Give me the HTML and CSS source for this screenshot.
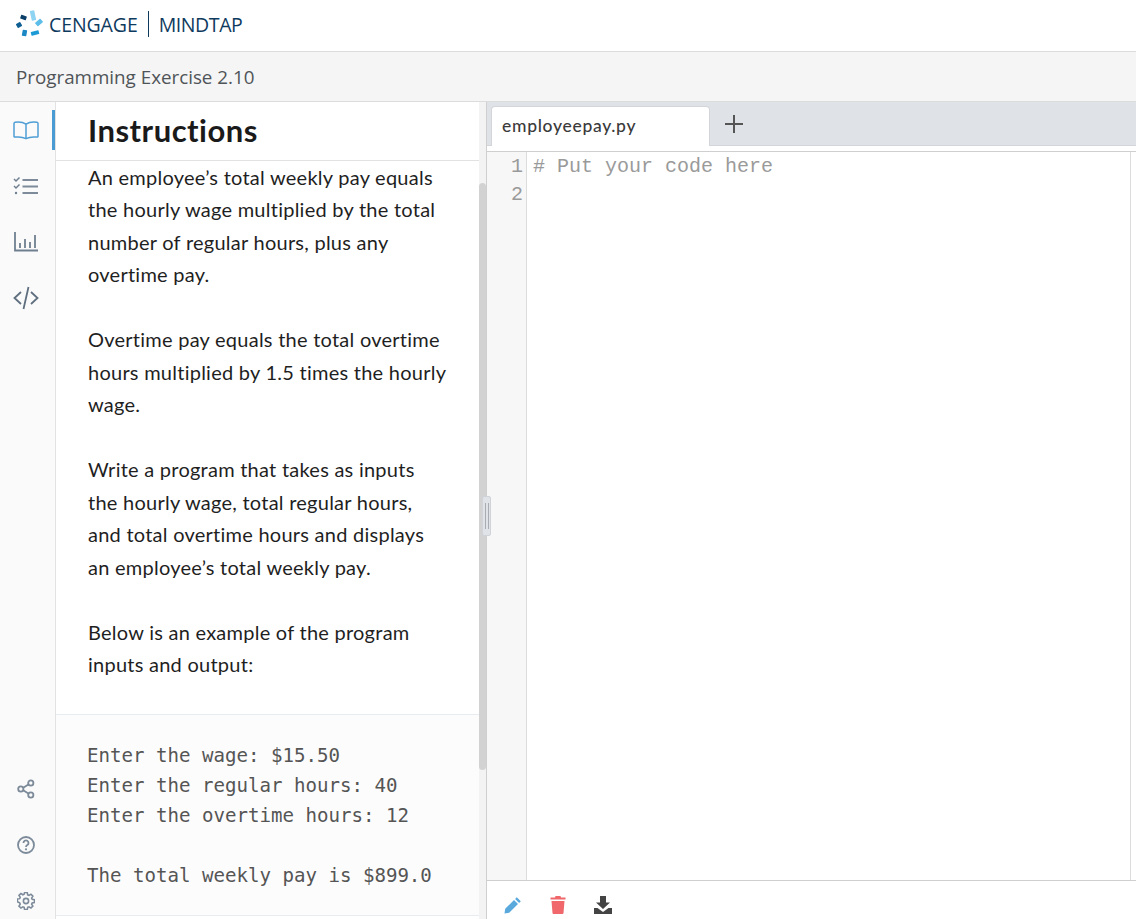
FILE: index.html
```html
<!DOCTYPE html>
<html lang="en">
<head>
<meta charset="utf-8">
<title>Programming Exercise 2.10</title>
<link rel="stylesheet" href="styles.css">
</head>
<body>
<header class="brand">
  <svg class="logo" width="30" height="28" viewBox="0 0 30 28">
    <rect x="14.750" y="0.500" width="4.500" height="10" rx="0.5" transform="rotate(-12 17 5.500)" fill="#8fd3f2"/>
    <rect x="19.500" y="10.250" width="7" height="4.500" rx="0.5" transform="rotate(-40 23 12.500)" fill="#5bbde8"/>
    <rect x="15" y="21" width="8" height="4" rx="0.5" transform="rotate(-15 19 23)" fill="#1b9ad6"/>
    <rect x="6.250" y="20" width="4.500" height="6" rx="0.5" transform="rotate(10 8.500 23)" fill="#1b87c4"/>
    <rect x="0.500" y="12.750" width="5" height="4.500" rx="0.5" transform="rotate(-30 3 15)" fill="#0f5f93"/>
    <rect x="4.500" y="5.500" width="6" height="4" rx="0.5" transform="rotate(20 7.500 7.500)" fill="#0b3f68"/>
  </svg>
  <span class="brand-name">CENGAGE</span>
  <span class="brand-sep"></span>
  <span class="brand-name product">MINDTAP</span>
</header>
<div class="subtitle">Programming Exercise 2.10</div>
<main class="workspace">
  <nav class="rail">
    <div class="rail-group">
      <div class="rail-item active">
        <svg width="26" height="20" viewBox="0 0 26 20" fill="none" stroke="#4f9fd6" stroke-width="1.5"><path d="M13 4.2C10.5 2.4 6 1.6 2 2.2Q1 2.4 1 3.4V16.2Q1 17.2 2 17.1C6 16.6 10 17 13 18.6C16 17 20 16.6 24 17.1Q25 17.2 25 16.2V3.4Q25 2.4 24 2.2C20 1.6 15.5 2.4 13 4.2ZM13 4.2V18.6"/></svg>
      </div>
      <div class="rail-item">
        <svg width="26" height="20" viewBox="0 0 26 20" fill="none" stroke="#6f7f8f" stroke-width="1.500"><path d="M1 3l2 2 3.500-3.500M1 10l2 2 3.500-3.500"/><circle cx="3" cy="17" r="1.200" fill="#6f7f8f" stroke="none"/><path d="M9.500 4H25M9.500 10.500H25M9.500 17H25" stroke-width="2" stroke="#7c8a99"/></svg>
      </div>
      <div class="rail-item">
        <svg width="24" height="20" viewBox="0 0 24 20" fill="none" stroke="#6f7f8f" stroke-width="1.500"><path d="M1 0V18.500H24" stroke-width="1.800"/><path d="M6 16V11M11 16V7M16 16V10M21 16V3" stroke-width="1.800"/></svg>
      </div>
      <div class="rail-item">
        <svg width="26" height="24" viewBox="0 0 26 24" fill="none" stroke="#5f6f7f" stroke-width="1.800"><path d="M8 6L1.500 12L8 18M18 6L24.500 12L18 18M15.500 1L10.500 23"/></svg>
      </div>
    </div>
    <div class="rail-group rail-bottom">
      <div class="rail-item">
        <svg width="18" height="20" viewBox="0 0 18 20" fill="none" stroke="#7c8a99" stroke-width="1.800"><circle cx="3.800" cy="10" r="2.600"/><circle cx="13.800" cy="4" r="2.600"/><circle cx="13.800" cy="16" r="2.600"/><path d="M6.200 8.700L11.400 5.400M6.200 11.300L11.400 14.600"/></svg>
      </div>
      <div class="rail-item">
        <svg width="18" height="18" viewBox="0 0 18 18" fill="none" stroke="#7c8a99" stroke-width="1.800"><circle cx="9" cy="9" r="8"/><path d="M6.500 7a2.500 2.500 0 1 1 3.800 2.100C9.400 9.700 9 10 9 11"/><circle cx="9" cy="13.300" r="1.100" fill="#7c8a99" stroke="none"/></svg>
      </div>
      <div class="rail-item">
        <svg width="18" height="18" viewBox="0 0 18 18" fill="none" stroke="#7c8a99" stroke-width="1.600"><circle cx="9" cy="9" r="2.600"/><path d="M7.600 1h2.800l.4 2.300 1.400.6 1.900-1.300 2 2-1.300 1.900.6 1.400 2.300.4v2.800l-2.300.4-.6 1.400 1.300 1.900-2 2-1.900-1.300-1.400.6-.4 2.300H7.600l-.4-2.300-1.400-.6-1.900 1.300-2-2 1.300-1.900-.6-1.400L.3 10.400V7.600l2.300-.4.6-1.400-1.300-1.900 2-2 1.900 1.300 1.400-.6z" transform="translate(.1 -.4) scale(.98)"/></svg>
      </div>
    </div>
  </nav>
  <section class="instructions">
    <h1 class="instructions-title">Instructions</h1>
    <div class="instructions-scroll">
      <div class="instructions-body">
        <p>An employee’s total weekly pay equals the hourly wage multiplied by the total number of regular hours, plus any overtime pay.</p>
        <p>Overtime pay equals the total overtime hours multiplied by 1.5 times the hourly wage.</p>
        <p>Write a program that takes as inputs the hourly wage, total regular hours, and total overtime hours and displays an employee’s total weekly pay.</p>
        <p>Below is an example of the program inputs and output:</p>
      </div>
      <pre class="sample">Enter the wage: $15.50
Enter the regular hours: 40
Enter the overtime hours: 12

The total weekly pay is $899.0</pre>
    </div>
  </section>
  <div class="splitter">
    <div class="scroll-thumb"></div>
    <div class="grip"><span></span><span></span></div>
  </div>
  <section class="editor">
    <div class="tabs">
      <div class="tab">employeepay.py</div>
      <svg class="add-tab" width="18" height="18" viewBox="0 0 18 18" stroke="#555" stroke-width="2"><path d="M9 0V18M0 9H18"/></svg>
    </div>
    <div class="code">
      <div class="gutter"><span>1</span><span>2</span></div>
      <div class="lines"># Put your code here</div>
      <div class="minimap"></div>
    </div>
    <div class="toolbar">
      <svg width="18" height="18" viewBox="0 0 18 18" fill="#5aa9dd"><path d="M12.800 1.200l4 4-1.700 1.700-4-4zM10 4l4 4-8.800 8.800L.5 17.500l.7-4.700z"/></svg>
      <svg width="16" height="18" viewBox="0 0 16 18" fill="#f0686c"><path d="M5.500 0h5l.5 1.500h4.500V3.500H.5V1.500H5zM1.500 5h13l-1 12q-.1 1-1 1h-9q-.9 0-1-1z"/></svg>
      <svg width="18" height="18" viewBox="0 0 18 18" fill="#444"><path d="M6 0h6v6.500h4L9 13 2 6.500h4zM0 12h3.500L9 16l5.500-4H18v6H0z"/></svg>
    </div>
  </section>
</main>
</body>
</html>
```
FILE: styles.css
```css
* { box-sizing: border-box; }
html, body { height: 100%; }
body {
  margin: 0;
  height: 919px;
  overflow: hidden;
  display: flex;
  flex-direction: column;
  background: #fff;
  font-family: "Open Sans", sans-serif;
}
.brand {
  flex: 0 0 52px;
  display: flex;
  align-items: center;
  padding: 0 0 0 16px;
  border-bottom: 1px solid #dcdcdc;
  background: #fff;
}
.logo { margin-right: 3px; margin-top: -3px; }
.brand-name { font-size: 19.500px; color: #0e3a5e; letter-spacing: -0.100px; margin-top: -3px; }
.brand-name.product { letter-spacing: -0.400px; }
.brand-sep { width: 1px; height: 26px; background: #0e3a5e; margin: -3px 10px 0 10px; }
.subtitle {
  flex: 0 0 50px;
  display: flex;
  align-items: center;
  padding-left: 16px;
  font-size: 18.800px;
  color: #4f5458;
  background: #f5f5f5;
  border-bottom: 1px solid #dcdcdc;
}
.workspace { flex: 1; min-height: 0; display: flex; }
.rail {
  flex: 0 0 56px;
  display: flex;
  flex-direction: column;
  justify-content: space-between;
  background: #fafafa;
  border-right: 1px solid #e2e2e2;
}
.rail-bottom { margin-bottom: -10px; }
.rail-item {
  height: 56px;
  display: flex;
  align-items: center;
  justify-content: center;
  padding-right: 3px;
  position: relative;
}
.rail-item.active::after {
  content: "";
  position: absolute;
  right: 0;
  top: 8px;
  width: 3px;
  height: 40px;
  background: #4a9ad4;
}
.instructions {
  flex: 0 0 423px;
  min-width: 0;
  display: flex;
  flex-direction: column;
  overflow: hidden;
}
.instructions-title {
  flex: 0 0 59px;
  margin: 0;
  padding: 9px 0 0 32px;
  font-family: "Lato", sans-serif;
  font-size: 31px;
  font-weight: 700;
  letter-spacing: 0.500px;
  font-variant-ligatures: none;
  line-height: 39px;
  color: #1a1a1a;
  border-bottom: 1px solid #e2e2e2;
}
.instructions-scroll { flex: 1; min-height: 0; overflow: hidden; }
.instructions-body {
  margin-top: -0.400px;
  padding: 0 32px 1px 32px;
  font-family: "Lato", sans-serif;
  font-size: 20px;
  letter-spacing: 0.250px;
  font-variant-ligatures: none;
  line-height: 32.500px;
  color: #1f1f1f;
}
.instructions-body p { margin: 0 0 32.500px; }
.sample {
  margin: 0;
  padding: 26px 32px 24px 31px;
  font-family: "DejaVu Sans Mono", monospace;
  font-size: 19.100px;
  line-height: 30px;
  color: #555;
  background: #fcfcfc;
  border-top: 1px solid #e6ecef;
  border-bottom: 1px solid #e6ecef;
}
.splitter {
  flex: 0 0 8px;
  position: relative;
  background: #f3f3f3;
  border-right: 1px solid #cfcfcf;
}
.scroll-thumb {
  position: absolute;
  left: 0;
  top: 81px;
  width: 7px;
  height: 587px;
  background: #d2d2d2;
  border-radius: 4px;
}
.grip {
  position: absolute;
  left: 3px;
  top: 394px;
  width: 9px;
  height: 40px;
  display: flex;
  justify-content: center;
  align-items: center;
  gap: 2px;
  background: #e0e3e8;
  border: 1px solid #d0d3d8;
  border-radius: 2px;
  z-index: 1;
}
.grip span { width: 1px; height: 26px; background: #a9adb2; }
.editor { flex: 1; min-width: 0; display: flex; flex-direction: column; }
.tabs {
  flex: 0 0 44px;
  display: flex;
  align-items: flex-end;
  background: #dfe2e7;
  padding-left: 4px;
  border-bottom: 1px solid #d3d5d9;
}
.tab {
  width: 219px;
  height: 40px;
  margin-bottom: -1px;
  padding: 6px 0 0 10px;
  font-family: "Lato", sans-serif;
  font-size: 17.500px;
  font-weight: 500;
  letter-spacing: 0.700px;
  line-height: 26px;
  color: #3a3a3a;
  background: #fff;
  border: 1px solid #d3d5d9;
  border-bottom: 0;
  border-radius: 4px 4px 0 0;
}
.add-tab { margin: 0 0 12px 15px; }
.code {
  flex: 1;
  min-height: 0;
  display: flex;
  margin-top: 5px;
  border-top: 1px solid #cfcfcf;
  font-family: "Liberation Mono", monospace;
  font-size: 20px;
  line-height: 28px;
}
.gutter {
  flex: 0 0 40px;
  display: flex;
  flex-direction: column;
  align-items: flex-end;
  padding: 1px 3px 0 0;
  color: #9a9a9a;
  background: #f7f7f7;
  border-right: 1px solid #dcdcdc;
}
.lines { flex: 1; padding: 1px 0 0 6px; color: #9a9a9a; }
.minimap { flex: 0 0 6px; border-left: 1px solid #dcdcdc; }
.toolbar {
  flex: 0 0 39px;
  display: flex;
  align-items: flex-start;
  gap: 28px;
  padding: 15px 0 0 17px;
  border-top: 1px solid #cfcfcf;
}
```
